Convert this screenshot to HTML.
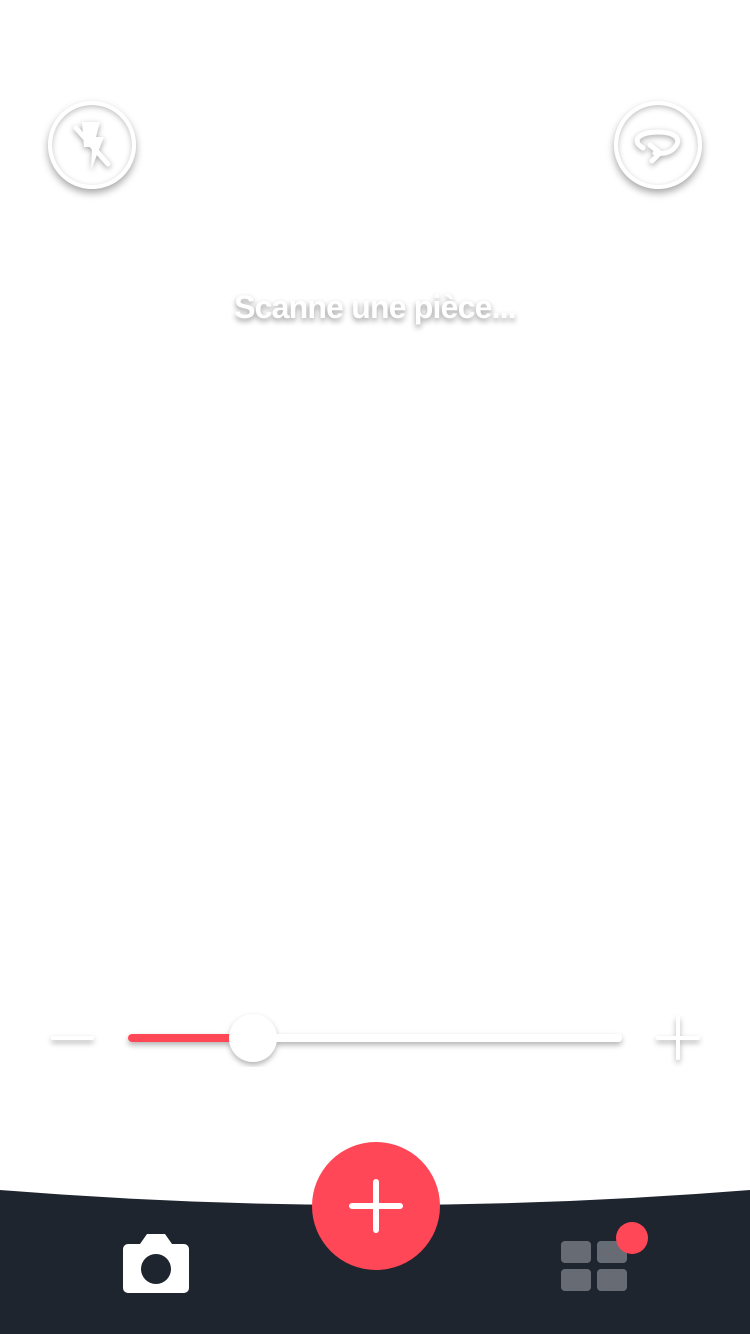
<!DOCTYPE html>
<html><head><style>
body{margin:0;width:750px;height:1334px;background:#fff;position:relative;overflow:hidden;font-family:"Liberation Sans",sans-serif}
.c{position:absolute;width:80px;height:80px;border:4px solid #fff;border-radius:50%;box-shadow:0 4px 8px rgba(0,0,0,.35),inset 0 2px 6px rgba(0,0,0,.25);top:101px}
.t{position:absolute;top:289px;width:750px;text-align:center;color:#fff;font-weight:bold;font-size:32px;letter-spacing:-0.8px;text-shadow:0 3px 6px rgba(0,0,0,.4)}
</style></head><body>
<div class="c" style="left:48px"></div>
<div class="c" style="left:614px"></div>
<svg style="position:absolute;left:0;top:0" width="750" height="400">
<g fill="#fff" style="filter:drop-shadow(0 2px 3px rgba(0,0,0,.35))">
<path d="M82 122 L100 122 L96 137 L104 137 L91 170 L92 147 L84 147 Z"/>
<path d="M76 128 L108 164" stroke="#fff" stroke-width="5" stroke-linecap="round"/>
<path d="M643 148 C630 140 640 132 658 132 C676 132 684 140 672 150 C668 153 662 154 655 153" fill="none" stroke="#fff" stroke-width="5" stroke-linecap="round"/>
<path d="M650 145 L660 153 L652 161" fill="none" stroke="#fff" stroke-width="5" stroke-linecap="round"/>
</g></svg>
<div class="t">Scanne une pièce...</div>
<svg style="position:absolute;left:0;top:1000px" width="750" height="80">
<defs><filter id="s"><feDropShadow dx="0" dy="3" stdDeviation="3" flood-opacity=".3"/></filter></defs>
<g filter="url(#s)">
<line x1="53" y1="38" x2="92" y2="38" stroke="#fff" stroke-width="4" stroke-linecap="round"/>
<line x1="658" y1="38" x2="698" y2="38" stroke="#fff" stroke-width="4" stroke-linecap="round"/>
<line x1="678" y1="18" x2="678" y2="58" stroke="#fff" stroke-width="4" stroke-linecap="round"/>
<line x1="132" y1="38" x2="618" y2="38" stroke="#fff" stroke-width="8" stroke-linecap="round"/>
<line x1="132" y1="38" x2="250" y2="38" stroke="#ff4757" stroke-width="8" stroke-linecap="round"/>
<circle cx="253" cy="38" r="24" fill="#fff"/>
</g></svg>
<svg style="position:absolute;left:0;top:1130px" width="750" height="204">
<path d="M0 60 Q375 90 750 60 L750 204 L0 204 Z" fill="#1f252f"/>
<circle cx="376" cy="76" r="64" fill="#ff4757"/>
<line x1="352" y1="76" x2="400" y2="76" stroke="#fff" stroke-width="6" stroke-linecap="round"/>
<line x1="376" y1="52" x2="376" y2="100" stroke="#fff" stroke-width="6" stroke-linecap="round"/>
<path d="M128 114 h12 l7 -10 h18 l7 10 h12 a5 5 0 0 1 5 5 v39 a5 5 0 0 1 -5 5 h-56 a5 5 0 0 1 -5 -5 v-39 a5 5 0 0 1 5 -5z" fill="#fff"/>
<ellipse cx="156" cy="139" rx="15" ry="15" fill="#1f252f"/>
<g fill="#676b73"><rect x="561" y="111" width="30" height="22" rx="4"/><rect x="597" y="111" width="30" height="22" rx="4"/><rect x="561" y="139" width="30" height="22" rx="4"/><rect x="597" y="139" width="30" height="22" rx="4"/></g>
<circle cx="632" cy="108" r="16" fill="#ff4757"/>
</svg>
</body></html>
